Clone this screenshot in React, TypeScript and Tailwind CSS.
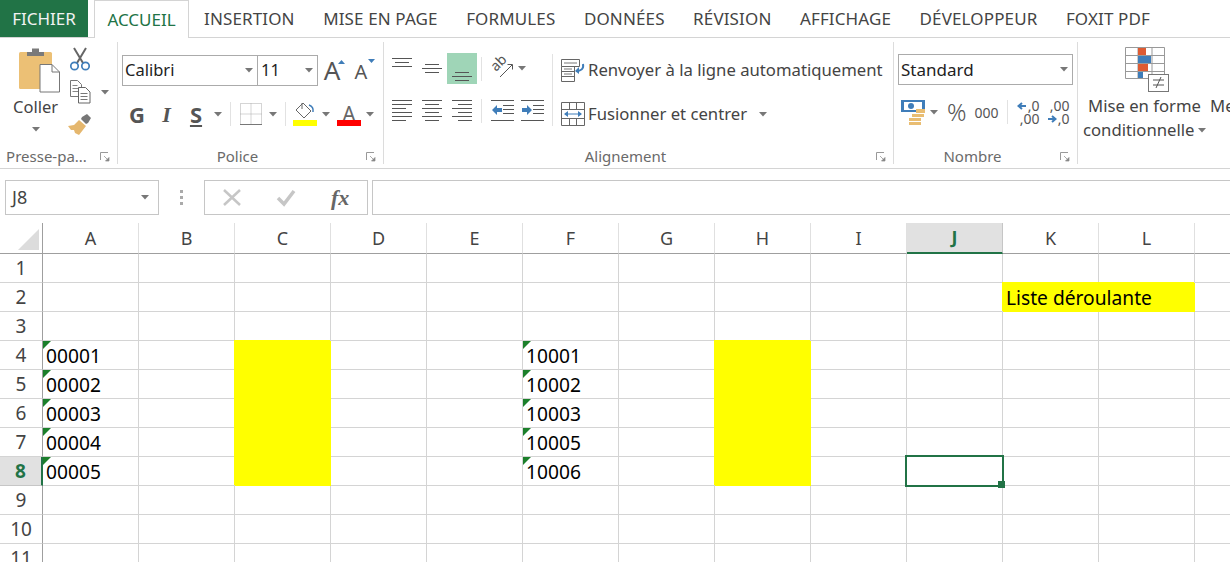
import React from "react";

const COLS = ["A", "B", "C", "D", "E", "F", "G", "H", "I", "J", "K", "L", ""];
const ROWS = [1, 2, 3, 4, 5, 6, 7, 8, 9, 10, 11];
const TABS = ["INSERTION", "MISE EN PAGE", "FORMULES", "DONNÉES", "RÉVISION", "AFFICHAGE", "DÉVELOPPEUR", "FOXIT PDF"];

const CELLS: Record<string, string> = {
  A4: "00001", A5: "00002", A6: "00003", A7: "00004", A8: "00005",
  F4: "10001", F5: "10002", F6: "10003", F7: "10005", F8: "10006",
};

function isYellow(col: string, row: number) {
  if ((col === "C" || col === "H") && row >= 4 && row <= 8) return true;
  return (col === "K" || col === "L") && row === 2;
}

function Caret({ className = "" }: { className?: string }) {
  return (
    <svg width="8" height="5" viewBox="0 0 8 5" className={`shrink-0 ${className}`}>
      <path d="M0 0h8L4 4.500z" fill="#777" />
    </svg>
  );
}

function Launcher() {
  return (
    <svg width="10" height="10" viewBox="0 0 10 10" className="absolute right-[7px] top-[8px]">
      <path d="M.5 8V.5H8" fill="none" stroke="#999" />
      <path d="M4 4l4 4M9 5.500V9H5.500z" fill="#888" stroke="#888" strokeWidth=".7" />
    </svg>
  );
}

function Sep() {
  return <div className="w-px shrink-0 self-stretch my-[4px] bg-[#dcdcdc]" />;
}

function MiniSep({ className = "" }: { className?: string }) {
  return <div className={`w-px h-[24px] shrink-0 bg-[#e2e2e2] ${className}`} />;
}

function Title({ children }: { children: React.ReactNode }) {
  return (
    <div className="relative h-[24px] mt-auto pt-px pr-[26px] flex items-center justify-center text-[15px] text-[#6a6a6a]">
      {children}
      <Launcher />
    </div>
  );
}

// lines is a list of [x1, x2, y] in a 20x22 box
function Lines({ lines, className = "" }: { lines: number[][]; className?: string }) {
  return (
    <svg width="20" height="22" viewBox="0 0 20 22" className={`shrink-0 ${className}`}>
      {lines.map((l, i) => (
        <path key={i} d={`M${l[0]} ${l[2] + 0.5}H${l[1]}`} stroke="#555" />
      ))}
    </svg>
  );
}

function PasteIcon() {
  return (
    <svg width="42" height="46" viewBox="0 0 42 46">
      <rect x="0" y="5" width="33" height="37" rx="1.500" fill="#ecc075" />
      <path d="M8 9V5h5V1.500h7V5h5v4z" fill="#7a7a7a" />
      <path d="M21 17.500h12l7.500 7.500v20H21z" fill="#fff" stroke="#777" />
      <path d="M33 17.500V25h7.500" fill="none" stroke="#777" />
    </svg>
  );
}

function ScissorsIcon() {
  return (
    <svg width="22" height="24" viewBox="0 0 22 24">
      <path d="M5 1l9 15M17 1L8 16" stroke="#666" strokeWidth="2" fill="none" />
      <circle cx="5.500" cy="19" r="3.700" fill="none" stroke="#3f7db9" strokeWidth="1.700" />
      <circle cx="16.500" cy="19" r="3.700" fill="none" stroke="#3f7db9" strokeWidth="1.700" />
    </svg>
  );
}

function CopyIcon() {
  return (
    <svg width="22" height="24" viewBox="0 0 22 24">
      <path d="M.5.5h7l4 4v12H.5z" fill="#fff" stroke="#777" />
      <path d="M2.500 5.500h5M2.500 8.500h7M2.500 11.500h7" stroke="#888" />
      <path d="M8.500 7.500h7l4.500 4.500v11H8.500z" fill="#fff" stroke="#666" />
      <path d="M10.500 13.500h7M10.500 16.500h7M10.500 19.500h7" stroke="#777" />
    </svg>
  );
}

function BrushIcon() {
  return (
    <svg width="24" height="22" viewBox="0 0 24 22">
      <path d="M14 3l5-3 4 4-3 5-2 1-5-5z" fill="#777" />
      <path d="M11 6l7 6-7 9-4-2-1-3-3 0-3-4 6-1z" fill="#e5b76e" />
    </svg>
  );
}

function BorderIcon() {
  return (
    <svg width="22" height="22" viewBox="0 0 22 22">
      <path d="M.5.5h21v21H.5zM11 .5v21M.5 11h21" fill="none" stroke="#aaa" strokeDasharray="1 1" />
      <path d="M0 21.500h22" stroke="#777" />
    </svg>
  );
}

function FillIcon() {
  return (
    <svg width="24" height="25" viewBox="0 0 24 25">
      <path d="M10 1l8 8-7 7-8-8z" fill="#fff" stroke="#666" />
      <path d="M9 1v6" stroke="#666" />
      <path d="M16 3c3 1 4.500 4 4 7" fill="none" stroke="#3f7db9" strokeWidth="1.500" />
      <rect x="0" y="18" width="24" height="6" fill="#ffff00" />
    </svg>
  );
}

function OrientationIcon() {
  return (
    <svg width="26" height="26" viewBox="0 0 26 26" className="overflow-visible">
      <text x="0" y="0" transform="translate(4 16) rotate(-45)" fontSize="14" fill="#555" fontFamily="Noto Sans">
        ab
      </text>
      <path d="M8 21L20 9" stroke="#555" fill="none" />
      <path d="M15.500 8.500H20.500V13.500" stroke="#555" fill="none" />
    </svg>
  );
}

function WrapIcon() {
  return (
    <svg width="24" height="23" viewBox="0 0 24 23">
      <path d="M.5.5h18v7H.5zM.5 7.500v15h13v-15M.5 12.500h13M.5 17.500h13" fill="none" stroke="#666" />
      <path d="M3 4h13M3 10h8M3 15h8" stroke="#777" />
      <path d="M22 5c1 5-2 7-7 7" fill="none" stroke="#3f7db9" strokeWidth="2" />
      <path d="M18 8l-4 4 4 3z" fill="#3f7db9" />
    </svg>
  );
}

function MergeIcon() {
  return (
    <svg width="24" height="24" viewBox="0 0 24 24">
      <path d="M.5.5h23v23H.5zM.5 7.500h23M.5 16.500h23M8.500.5v7M15.500.5v7M8.500 16.500v7M15.500 16.500v7" fill="none" stroke="#666" />
      <path d="M4 12h16" stroke="#3f7db9" />
      <path d="M7 9l-4 3 4 3zM17 9l4 3-4 3z" fill="#3f7db9" />
    </svg>
  );
}

function IndentIcon({ out }: { out: boolean }) {
  return (
    <svg width="23" height="22" viewBox="0 0 23 22">
      <path d="M0 .5h23M12 5.500h11M12 9.500h11M12 13.500h11M0 20.500h23" stroke="#555" />
      {out ? (
        <path d="M1 10l5-5v3h5v4H6v3z" fill="#3f7db9" />
      ) : (
        <path d="M11 10L6 5v3H1v4h5v3z" fill="#3f7db9" />
      )}
    </svg>
  );
}

function CurrencyIcon() {
  return (
    <svg width="24" height="25" viewBox="0 0 24 25">
      <rect x="0" y="0" width="24" height="12" fill="#3f7db9" />
      <rect x="3" y="2" width="18" height="8" fill="#fff" />
      <circle cx="10" cy="6" r="3" fill="#3f7db9" />
      <rect x="15" y="9" width="9" height="4" fill="#e9bd72" />
      <rect x="11" y="14" width="12" height="3" fill="#e9bd72" />
      <rect x="8" y="18" width="12" height="3" fill="#e9bd72" />
      <rect x="8" y="22" width="12" height="3" fill="#e9bd72" />
    </svg>
  );
}

function DecimalIcon({ more }: { more: boolean }) {
  return (
    <div className="w-[26px] text-[14px] leading-[13px] text-[#555] text-right">
      {more ? (
        <>
          <div className="flex items-center justify-end gap-[1px]">
            <svg width="10" height="10" viewBox="0 0 10 10">
              <path d="M9 5H2M5 2L1.500 5 5 8" fill="none" stroke="#3f7db9" strokeWidth="2" />
            </svg>
            ,0
          </div>
          <div>,00</div>
        </>
      ) : (
        <>
          <div>,00</div>
          <div className="flex items-center justify-end gap-[1px]">
            <svg width="10" height="10" viewBox="0 0 10 10">
              <path d="M1 5h7M5 2l3.500 3L5 8" fill="none" stroke="#3f7db9" strokeWidth="2" />
            </svg>
            ,0
          </div>
        </>
      )}
    </div>
  );
}

function CondIcon() {
  return (
    <svg width="44" height="46" viewBox="0 0 44 46">
      <path d="M.5.5h39v31H.5zM.5 8.500h39M.5 16.500h39M.5 24.500h39M13 .5v31M27 .5v31" fill="none" stroke="#999" />
      <rect x="13" y="1" width="8" height="7" fill="#dd5b33" />
      <rect x="13" y="9" width="13" height="7" fill="#3f7db9" />
      <rect x="13" y="17" width="10" height="7" fill="#dd5b33" />
      <rect x="13" y="25" width="5" height="6" fill="#3f7db9" />
      <rect x="23.500" y="27.500" width="20" height="17" fill="#fff" stroke="#777" />
      <path d="M28 33h11M28 38h11M36 30l-5 11" stroke="#555" fill="none" />
    </svg>
  );
}

function Triangle() {
  return (
    <svg width="8" height="8" viewBox="0 0 8 8" className="absolute left-0 top-0">
      <path d="M0 0h8L0 8z" fill="#1b7f2a" />
    </svg>
  );
}

function Cell({ col, row }: { col: string; row: number }) {
  const key = col + row;
  const value = CELLS[key];
  const yellow = isYellow(col, row);
  return (
    <div
      className={`relative flex items-center pl-[3px] pt-[3px] text-[19.200px] text-black border-r border-b ${
        yellow ? "bg-[#ffff00] border-[#ffff00] shadow-[-1px_-1px_0_#ffff00]" : "border-[#d4d4d4]"
      } ${key === "K2" || key === "J8" ? "z-10" : ""}`}
    >
      {value && <Triangle />}
      {value}
      {key === "K2" && <span className="whitespace-nowrap">Liste déroulante</span>}
      {key === "J8" && (
        <div className="absolute -left-[2px] -top-[2px] w-[99px] h-[32px] border-2 border-[#217346]">
          <div className="absolute -right-[3px] -bottom-[3px] w-[7px] h-[7px] bg-[#217346]" />
        </div>
      )}
    </div>
  );
}

export default function App() {
  return (
    <div className="w-[1230px] h-[562px] overflow-hidden bg-white font-['Noto_Sans',sans-serif] text-[#444]">
      {/* Tabs */}
      <div className="flex h-[38px] items-end border-b border-[#d4d4d4] pt-px text-[17px]">
        <div className="w-[88px] h-[37px] flex items-center justify-center bg-[#217346] text-[#f2f2f2]">FICHIER</div>
        <div className="ml-[6px] w-[95px] h-[38px] -mb-px flex items-center justify-center bg-white border border-b-0 border-[#d4d4d4] text-[#217346]">
          ACCUEIL
        </div>
        <div className="flex h-[37px] items-center gap-[28.500px] ml-[15px] whitespace-nowrap tracking-[0.130px]">
          {TABS.map((t) => (
            <span key={t}>{t}</span>
          ))}
        </div>
      </div>

      {/* Ribbon */}
      <div className="flex h-[131px] border-b border-[#d4d4d4] text-[16px]">
        {/* Presse-papiers */}
        <div className="w-[117px] shrink-0 flex flex-col">
          <div className="flex">
            <div className="w-[66px] flex flex-col items-center pl-[5px] pt-[9px]">
              <div className="pl-[9px]"><PasteIcon /></div>
              <div className="h-[22px] mt-[3px] leading-[22px] text-[16.500px] text-[#444]">Coller</div>
              <Caret className="mt-[9px]" />
            </div>
            <div className="flex flex-col pt-[9px] pl-[2px]">
              <div className="h-[22px] ml-[1px]"><ScissorsIcon /></div>
              <div className="flex items-center mt-[11px] gap-[2px] ml-[2px]">
                <CopyIcon />
                <Caret className="ml-[7px]" />
              </div>
              <div className="mt-[10px]"><BrushIcon /></div>
            </div>
          </div>
          <Title><span className="ml-[2px]">Presse-pa...</span></Title>
        </div>
        <Sep />

        {/* Police */}
        <div className="w-[265px] shrink-0 flex flex-col">
          <div className="flex items-center pt-[16px] pl-[4px]">
            <div className="w-[136px] h-[31px] flex items-center justify-between pl-[2px] pr-[4px] border border-[#ababab] text-[16.500px] text-[#222]">
              Calibri
              <Caret />
            </div>
            <div className="w-[61px] h-[31px] -ml-px flex items-center justify-between pl-[3px] pr-[4px] border border-[#ababab] text-[16.500px] text-[#222]">
              11
              <Caret />
            </div>
            <div className="relative w-[28px] text-center text-[26px] leading-[31px] text-[#555]">
              A
              <svg width="7" height="4" viewBox="0 0 7 4" className="absolute right-[1px] top-[5px]">
                <path d="M0 4h7L3.500 0z" fill="#3f7db9" />
              </svg>
            </div>
            <div className="relative w-[30px] text-center text-[20px] leading-[31px] text-[#555] pt-[2px]">
              A
              <svg width="7" height="4" viewBox="0 0 7 4" className="absolute right-[1px] top-[5px]">
                <path d="M0 0h7L3.500 4z" fill="#3f7db9" />
              </svg>
            </div>
          </div>
          <div className="flex items-center h-[26px] mt-[14px] pl-[4px] text-[22px] text-[#555]">
            <span className="w-[30px] text-center font-bold">G</span>
            <span className="w-[29px] text-center font-bold italic font-['Liberation_Serif',serif]">I</span>
            <span className="w-[30px] text-center font-bold underline">S</span>
            <Caret className="ml-[3px]" />
            <MiniSep className="ml-[8px]" />
            <div className="ml-[9px]"><BorderIcon /></div>
            <Caret className="ml-[7px]" />
            <MiniSep className="ml-[8px]" />
            <div className="ml-[7px]"><FillIcon /></div>
            <Caret className="ml-[5px]" />
            <div className="relative ml-[7px] w-[24px] h-[25px] flex justify-center text-[21px] leading-[24px] text-[#666]">
              A
              <div className="absolute left-0 bottom-[1px] w-[24px] h-[6px] bg-[#ff0000]" />
            </div>
            <Caret className="ml-[5px]" />
          </div>
          <Title>Police</Title>
        </div>
        <Sep />

        {/* Alignement */}
        <div className="w-[509px] shrink-0 flex flex-col">
          <div className="flex h-[107px]">
            <div className="flex flex-col pl-[8px] pt-[15px] w-[168px]">
              <div className="flex items-center h-[31px]">
                <Lines className="-mt-[8px]" lines={[[0, 20, 4], [3, 17, 8], [0, 20, 12]]} />
                <Lines className="ml-[10px]" lines={[[3, 17, 6], [0, 20, 10], [3, 17, 14]]} />
                <div className="ml-[5px] w-[30px] h-[31px] bg-[#9fd5b7] flex items-center justify-center">
                  <Lines className="mt-[8px]" lines={[[3, 17, 10], [0, 20, 14], [3, 17, 18]]} />
                </div>
                <MiniSep className="ml-[4px]" />
                <div className="ml-[10px]"><OrientationIcon /></div>
                <Caret />
              </div>
              <div className="flex items-center h-[26px] mt-[14px]">
                <Lines lines={[[0, 20, 0], [0, 20, 4], [0, 14, 8], [0, 20, 12], [0, 20, 16], [0, 14, 20]]} />
                <Lines className="ml-[10px]" lines={[[0, 20, 0], [3, 17, 4], [0, 20, 8], [3, 17, 12], [0, 20, 16], [3, 17, 20]]} />
                <Lines className="ml-[10px]" lines={[[0, 20, 0], [6, 20, 4], [0, 20, 8], [6, 20, 12], [0, 20, 16], [6, 20, 20]]} />
                <MiniSep className="ml-[9px]" />
                <div className="ml-[9px]"><IndentIcon out /></div>
                <div className="ml-[7px]"><IndentIcon out={false} /></div>
              </div>
            </div>
            <div className="w-px h-[72px] mt-[16px] bg-[#e2e2e2]" />
            <div className="flex flex-col pl-[8px] pt-[20px] text-[#444] text-[16.700px]">
              <div className="flex items-center h-[24px] gap-[3px] whitespace-nowrap">
                <WrapIcon />
                Renvoyer à la ligne automatiquement
              </div>
              <div className="flex items-center h-[24px] mt-[20px] gap-[3px] whitespace-nowrap">
                <MergeIcon />
                Fusionner et centrer
                <Caret className="ml-[9px]" />
              </div>
            </div>
          </div>
          <Title>Alignement</Title>
        </div>
        <Sep />

        {/* Nombre */}
        <div className="w-[183px] shrink-0 flex flex-col">
          <div className="pt-[16px] pl-[4px]">
            <div className="w-[175px] h-[31px] flex items-center justify-between pl-[2px] pr-[4px] border border-[#ababab] text-[17px] text-[#222]">
              Standard
              <Caret />
            </div>
          </div>
          <div className="flex items-center h-[26px] mt-[14px] pl-[7px]">
            <CurrencyIcon />
            <Caret className="ml-[5px]" />
            <span className="ml-[9px] text-[24px] leading-[26px] font-light text-[#555]">%</span>
            <span className="ml-[8px] text-[14px] text-[#555]">000</span>
            <MiniSep className="ml-[8px]" />
            <div className="ml-[6px]"><DecimalIcon more /></div>
            <div className="ml-[4px]"><DecimalIcon more={false} /></div>
          </div>
          <Title>Nombre</Title>
        </div>
        <Sep />

        {/* Mise en forme conditionnelle */}
        <div className="flex-1 flex flex-col items-start pt-[9px] pl-[5px] whitespace-nowrap text-[16.700px]">
          <div className="ml-[42px]"><CondIcon /></div>
          <div className="h-[24px] leading-[24px] mt-[1px] pl-[5px] flex gap-[9px]">
            <span>Mise en forme</span>
            <span>Mettre</span>
          </div>
          <div className="h-[24px] leading-[24px] flex items-center gap-[4px]">
            conditionnelle
            <Caret />
          </div>
        </div>
      </div>

      {/* Formula bar */}
      <div className="flex h-[35px] mt-[11px] pl-[5px] text-[#444]">
        <div className="w-[154px] flex items-center justify-between pl-[6px] pr-[9px] border border-[#c6c6c6] text-[18px]">
          J8
          <Caret />
        </div>
        <div className="w-[45px] flex flex-col items-center justify-center gap-[3px]">
          <div className="w-[3px] h-[3px] bg-[#aaa]" />
          <div className="w-[3px] h-[3px] bg-[#aaa]" />
          <div className="w-[3px] h-[3px] bg-[#aaa]" />
        </div>
        <div className="w-[164px] flex items-center border border-[#c6c6c6]">
          <svg width="18" height="18" viewBox="0 0 18 18" className="ml-[18px]">
            <path d="M1 1l16 15M17 1L1 16" stroke="#c6c6c6" strokeWidth="2.500" fill="none" />
          </svg>
          <svg width="20" height="18" viewBox="0 0 20 18" className="ml-[35px]">
            <path d="M2 9l6 6L18 2" stroke="#c6c6c6" strokeWidth="3.500" fill="none" />
          </svg>
          <span className="ml-[35px] font-['Liberation_Serif',serif] italic font-bold text-[22px] text-[#666]">fx</span>
        </div>
        <div className="flex-1 ml-[4px] border border-r-0 border-[#c6c6c6]" />
      </div>

      {/* Sheet */}
      <div className="mt-[8px] grid grid-cols-[43px_repeat(13,96px)] grid-rows-[31px_repeat(11,29px)]">
        <div className="relative border-r border-b border-[#9f9f9f]">
          <svg width="22" height="21" viewBox="0 0 22 21" className="absolute right-[2px] bottom-[3px]">
            <path d="M21 0v21H0z" fill="#dcdcdc" />
          </svg>
        </div>
        {COLS.map((c, i) =>
          c === "J" ? (
            <div key={i} className="flex items-center justify-center bg-[#e1e1e1] border-r border-b-2 border-r-[#c6c6c6] border-b-[#217346] text-[18px] font-bold text-[#217346]">
              {c}
            </div>
          ) : (
            <div key={i} className="flex items-center justify-center border-r border-b border-r-[#e0e0e0] border-b-[#9f9f9f] text-[18px] text-[#444]">
              {c}
            </div>
          )
        )}
        {ROWS.map((r) => (
          <React.Fragment key={r}>
            {r === 8 ? (
              <div className="flex items-center justify-center bg-[#e1e1e1] border-r-2 border-b border-r-[#217346] border-b-[#c6c6c6] text-[19px] font-bold text-[#217346]">
                {r}
              </div>
            ) : (
              <div className="flex items-center justify-center border-r border-b border-r-[#9f9f9f] border-b-[#d4d4d4] text-[19px] text-[#444]">
                {r}
              </div>
            )}
            {COLS.map((c, i) => (
              <Cell key={i} col={c} row={r} />
            ))}
          </React.Fragment>
        ))}
      </div>
    </div>
  );
}
